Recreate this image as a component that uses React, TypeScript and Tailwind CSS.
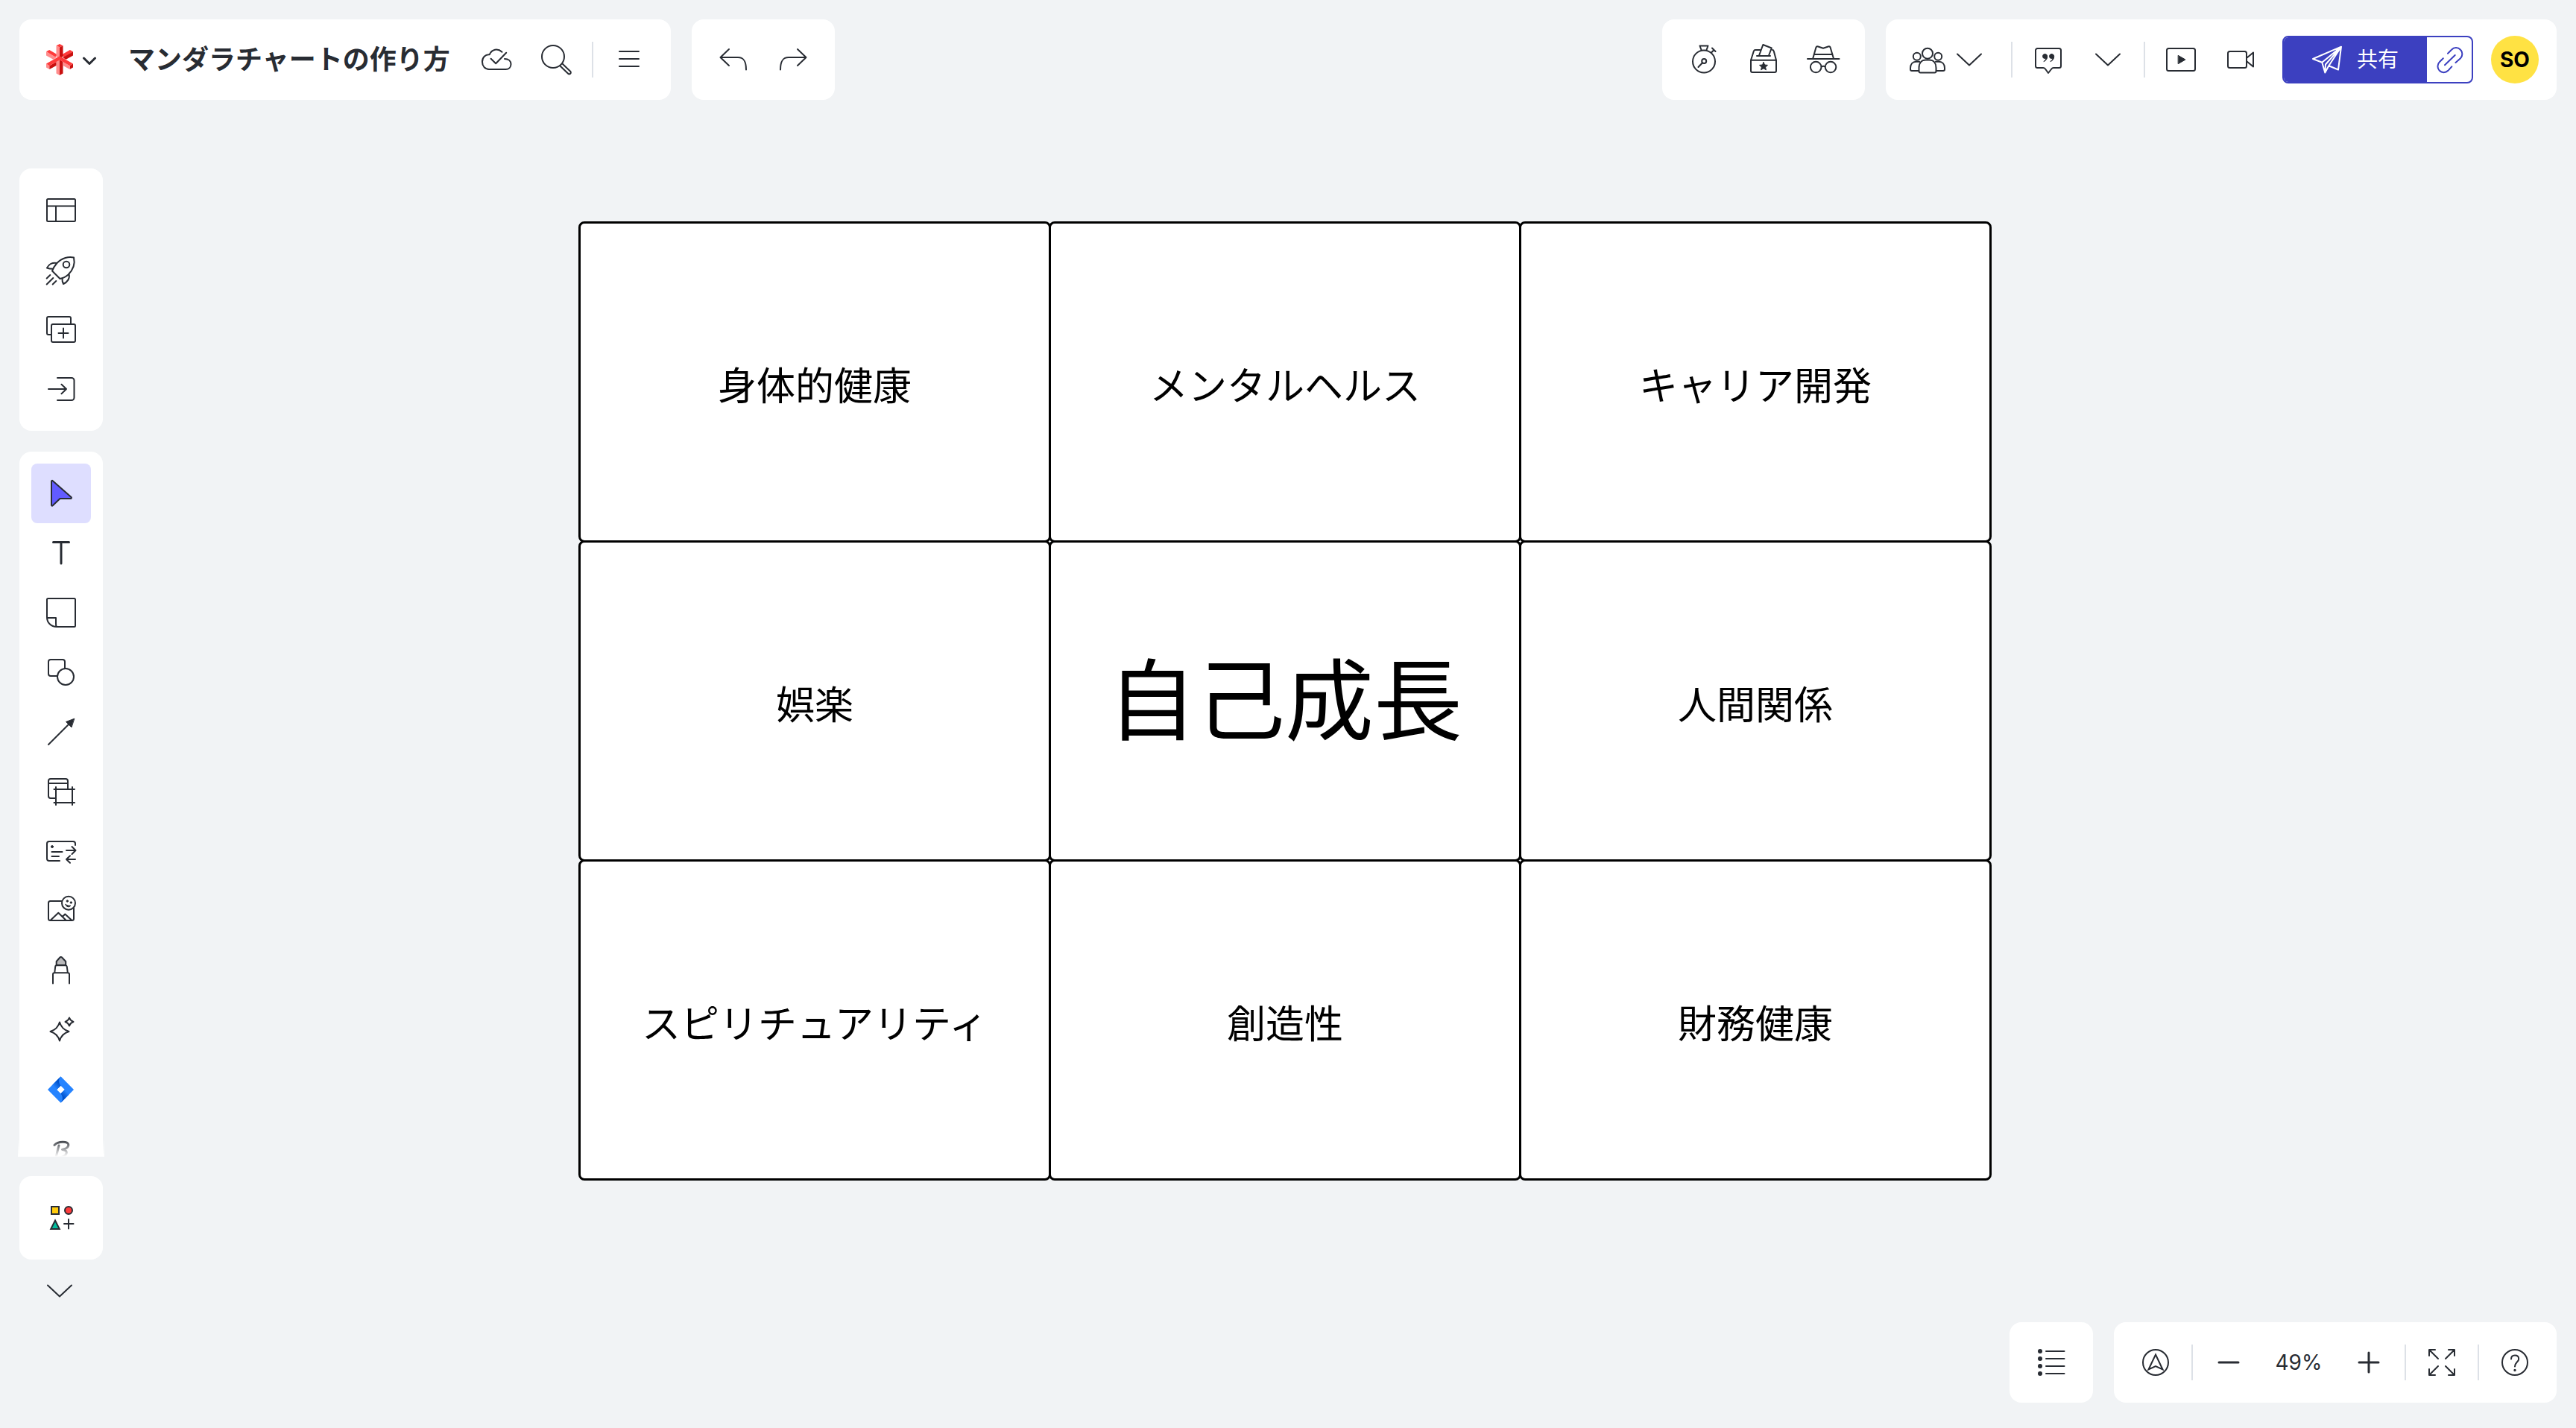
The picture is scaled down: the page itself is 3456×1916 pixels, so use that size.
import type { ReactNode } from "react";

interface IconProps {
  children: ReactNode;
  width?: number;
}

// every toolbar glyph shares the same 48px grid
function Icon({ children, width = 2 }: IconProps) {
  return (
    <svg
      viewBox="0 0 48 48"
      className="size-12 shrink-0"
      fill="none"
      stroke="currentColor"
      strokeWidth={width}
      strokeLinecap="round"
      strokeLinejoin="round"
      aria-hidden="true"
    >
      {children}
    </svg>
  );
}

function ToolButton({ label, active, children }: { label: string; active?: boolean; children: ReactNode }) {
  return (
    <button
      type="button"
      aria-label={label}
      className={`flex size-20 shrink-0 items-center justify-center rounded-lg ${active ? "bg-[#dedeff]" : ""}`}
    >
      {children}
    </button>
  );
}

function Divider() {
  return <div className="mx-2 h-12 w-[2px] shrink-0 bg-[#dde1e7]" />;
}

function Logo() {
  return (
    <svg viewBox="0 0 36 42" className="h-[42px] w-9" aria-hidden="true">
      <path fill="#ff3b3b" d="M0 10.3 4.2 8l12 7-4.4 2.6Z" />
      <path fill="#ff8c8c" d="m0 10.3 14 8L9.5 20.8 0 15.5Z" />
      <path fill="#ff3b3b" d="M36 10.3 31.8 8l-12 7 4.4 2.6Z" />
      <path fill="#c9100f" d="m36 10.3-14 8 4.5 2.5 9.5-5.3Z" />
      <path fill="#ff3b3b" d="m18 0 4.5 2.2L18 4.5l-4.5-2.3Z" />
      <path fill="#ff8c8c" d="M13.5 2.2 18 4.5V19l-4.5-2Z" />
      <path fill="#c9100f" d="M22.5 2.2 18 4.5V19l4.5-2Z" />
      <path fill="#ff8c8c" d="m13.5 24 4.5-3v21l-4.5-2.4Z" />
      <path fill="#c9100f" d="M22.5 24 18 21v21l4.5-2.4Z" />
      <path fill="#ff8c8c" d="m0 26.6 4.4 2.6V34L0 31.6Z" />
      <path fill="#c9100f" d="m4.4 29.2 9.1-5.3v5.2L4.4 34Z" />
      <path fill="#c9100f" d="m36 26.6-4.4 2.6V34l4.4-2.4Z" />
      <path fill="#ff8c8c" d="m31.6 29.2-9.1-5.3v5.2l9.1 4.9Z" />
      <path fill="#ff3b3b" d="m18 16.2 18 10.4-4.4 2.6L18 21.4 4.4 29.2 0 26.6Z" />
    </svg>
  );
}

function ChevronDown() {
  return (
    <Icon>
      <path d="m8 16.500 16 15 16-15" />
    </Icon>
  );
}

function Header() {
  return (
    <header className="flex h-[108px] shrink-0 items-stretch">
      <div className="flex items-center rounded-2xl bg-white px-4">
        <button type="button" aria-label="メインメニュー" className="ml-5 flex items-center gap-3">
          <Logo />
          <svg viewBox="0 0 20 12" className="mt-1 h-3 w-5" fill="none" stroke="#282c33" strokeWidth="3" strokeLinecap="round" strokeLinejoin="round" aria-hidden="true">
            <path d="m2.500 2 7.500 7.500L17.500 2" />
          </svg>
        </button>
        <h1 className="ml-[42px] mr-[22px] whitespace-nowrap text-[36px] leading-10 font-bold">マンダラチャートの作り方</h1>
        <ToolButton label="保存済み">
          <Icon>
            <path d="M31.500 13.800c-6-5.500-13.800-3.500-16.700 3.400C9 16.700 5 21.200 5 27c0 5.800 3.800 10 9 10h22.500c4.200 0 7-3 7-7 0-4.200-3.200-7-8.500-7" />
            <path d="m16.600 22.700 6.600 6.500 14-14.500" />
          </Icon>
        </ToolButton>
        <ToolButton label="検索">
          <Icon>
            <circle cx="20" cy="20" r="15" />
            <path d="m29.500 32.500 10.700 10.300a2.100 2.100 0 0 0 3-3L32.500 29.500" />
          </Icon>
        </ToolButton>
        <Divider />
        <ToolButton label="メニュー">
          <Icon>
            <path d="M11 13h26M11 23h26M11 33h26" />
          </Icon>
        </ToolButton>
      </div>

      <div className="ml-7 flex items-center rounded-2xl bg-white px-4">
        <ToolButton label="元に戻す">
          <Icon>
            <path d="M6.500 21H30c7.500 0 11 4.500 11 16.500M18 10 6.500 21 18 32" />
          </Icon>
        </ToolButton>
        <ToolButton label="やり直す">
          <Icon>
            <path d="M41.500 21H18C10.500 21 7 25.500 7 37.500M30 10l11.500 11L30 32" />
          </Icon>
        </ToolButton>
      </div>

      <div className="ml-auto flex items-center rounded-2xl bg-white px-4">
        <ToolButton label="タイマー">
          <Icon>
            <circle cx="24" cy="26.500" r="15" />
            <path d="M20.500 11 18.500 5.500h11l-2 5.500M34 14.500l3.500-3.500M35 8.500l4.500 4.500" />
            <circle cx="24.200" cy="26" r="3" />
            <path d="m21.800 28.500-5.300 5.500" />
          </Icon>
        </ToolButton>
        <ToolButton label="投票">
          <Icon>
            <path d="M7 24.700h34V39a2 2 0 0 1-2 2H9a2 2 0 0 1-2-2ZM7 24.700l3.800-12c.4-1.200 1.200-1.700 2.200-1.700h6M36 11c1 0 1.500.8 1.800 1.700L41 24.700M15 19h18M18 18.500 23.300 4l11.500 4.500L31 18.500" />
            <path fill="currentColor" strokeWidth="1" d="m24 27.500 1.600 3.500 3.900.4-2.900 2.600.8 3.800-3.400-2-3.400 2 .8-3.800-2.900-2.600 3.900-.4Z" />
          </Icon>
        </ToolButton>
        <ToolButton label="プライベートモード">
          <Icon>
            <path d="M3 23h42.500M10.200 22.500 14.300 8c.5-1.500 1.500-2 3-1.500l6.700 2.300 6.700-2.300c1.500-.5 2.500 0 3 1.500L38 22.500M11.800 17h24.800M21.600 33.500c1.500-1 3.500-1 5 0" />
            <circle cx="14.200" cy="34" r="7.300" />
            <circle cx="34" cy="34" r="7.300" />
          </Icon>
        </ToolButton>
      </div>

      <div className="ml-7 flex items-center rounded-2xl bg-white pl-4 pr-6">
        <ToolButton label="参加者">
          <Icon>
            <circle cx="24" cy="15.700" r="7" />
            <circle cx="9.800" cy="19.700" r="5" />
            <circle cx="38.200" cy="19.700" r="5" />
            <path d="M12.500 39.500V35c0-6.500 3.500-10.500 9-10.500h5c5.500 0 9 4 9 10.500v4.500c0 1.200-.8 2-2 2h-19c-1.200 0-2-.8-2-2ZM12 39H3c-1.200 0-2-.8-2-2v-1.500c0-5.500 3-8.800 7.500-8.800h4.500M36 39h9c1.200 0 2-.8 2-2v-1.500c0-5.500-3-8.800-7.500-8.800H35" />
          </Icon>
        </ToolButton>
        <button type="button" aria-label="参加者メニュー" className="-ml-2 mr-6 flex h-20 w-12 items-center">
          <ChevronDown />
        </button>
        <Divider />
        <ToolButton label="コメント">
          <Icon>
            <path d="M9.500 9h29A2.500 2.500 0 0 1 41 11.500v21a2.500 2.500 0 0 1-2.500 2.500h-7.500c-1.500 0-2 .5-2.700 1.500L24 42l-4-5.500c-.8-1-1.300-1.500-2.800-1.500H9.500A2.500 2.500 0 0 1 7 32.500v-21A2.500 2.500 0 0 1 9.500 9Z" />
            <path fill="currentColor" strokeWidth="1" d="M19.500 16.500a3 3 0 0 0 0 6c.6 0 1 0 1.300-.2-.2 1.800-1.300 3.200-3 4.200 3-.8 4.900-3.500 4.900-6.800 0-2-1.300-3.200-3.200-3.200ZM28.500 16.500a3 3 0 0 0 0 6c.6 0 1 0 1.300-.2-.2 1.800-1.300 3.200-3 4.200 3-.8 4.900-3.500 4.900-6.800 0-2-1.300-3.200-3.200-3.200Z" />
          </Icon>
        </ToolButton>
        <ToolButton label="コメント一覧">
          <ChevronDown />
        </ToolButton>
        <Divider />
        <ToolButton label="プレゼンテーション">
          <Icon>
            <rect x="5" y="9" width="38" height="30" rx="2.500" />
            <path fill="currentColor" strokeWidth="1" d="m20.500 18.500 9.500 5.500-9.500 5.500Z" />
          </Icon>
        </ToolButton>
        <ToolButton label="ビデオ通話">
          <Icon>
            <rect x="7" y="13" width="25" height="22" rx="2.500" />
            <path d="m32.500 21.500 8.500-7v19l-8.500-7" />
          </Icon>
        </ToolButton>

        <div className="ml-4 flex h-16 overflow-hidden rounded-lg border-2 border-[#3c40c0]">
          <button type="button" className="flex w-48 items-center justify-center gap-4 bg-[#3c40c0] pr-1 text-[28px] leading-8 text-white">
            <Icon>
              <path d="M5 23 43 6.700l-4 30.800-12.700-5.200-5 9.200-4-13.800ZM17.300 27.700 43 6.700 26.300 32.300M21.300 41.500 22 30.500 43 6.700" />
            </Icon>
            共有
          </button>
          <button type="button" aria-label="リンクをコピー" className="flex w-[60px] items-center justify-center text-[#3c40c0]">
            <Icon>
              <path d="m22 15.700 5-5a8.200 8.200 0 0 1 12 0 8.200 8.200 0 0 1 0 11.500l-6.500 5.800M15.800 22.300l-5 5a8.200 8.200 0 0 0 0 11.500 8.200 8.200 0 0 0 11.500 0l5-5.500M18 31.300 31.700 18" />
            </Icon>
          </button>
        </div>

        <button type="button" className="ml-6 size-16 rounded-full bg-[#ffe243] text-center text-[28px] leading-8 font-bold text-black">
          SO
        </button>
      </div>
    </header>
  );
}

function Sidebar() {
  return (
    <aside className="flex min-h-0 w-28 shrink-0 flex-col pt-[92px]">
      <nav aria-label="ボード" className="flex shrink-0 flex-col items-center rounded-2xl bg-white py-4">
        <ToolButton label="テンプレート">
          <Icon>
            <rect x="5" y="9" width="38" height="30" rx="1.500" />
            <path d="M5 18.500h38M17 18.500V39" />
          </Icon>
        </ToolButton>
        <ToolButton label="クイックスタート">
          <Icon>
            <path d="M41 7.500C34.500 6 25 7.500 18 15.500c-3 3.500-4.800 6.500-6 10L22.500 36c4.500-.7 8-2.800 11-5.500C41 23 42.500 14 41 7.500Z" />
            <circle cx="31" cy="17" r="4.300" />
            <path d="M18 15c-5.500-1.200-10.500 1.500-13 6.500 2.300 1 5 1.300 8 1.300M25.500 35.500c-.2 3 .3 5.500 1.500 7.500 5.500-2.500 9-7.500 7.500-13M9.300 31l-4.600 4.500M13.300 35l-8.600 8.500M17.300 39l-4.600 4.500" />
          </Icon>
        </ToolButton>
        <ToolButton label="フレームを追加">
          <Icon>
            <path d="M10.500 31H7a2 2 0 0 1-2-2V9a2 2 0 0 1 2-2h28a2 2 0 0 1 2 2v8" />
            <rect x="11" y="17" width="32" height="24" rx="2" />
            <path d="M27 22.500v13M20.500 29h13" />
          </Icon>
        </ToolButton>
        <ToolButton label="インポート">
          <Icon>
            <path d="M19 9h19a3.500 3.500 0 0 1 3.500 3.500v23A3.500 3.500 0 0 1 38 39H19M7 24h24M24.500 17.700 31 24l-6.500 6.300" />
          </Icon>
        </ToolButton>
      </nav>

      <div className="relative mt-7 min-h-0 flex-1">
        <nav aria-label="ツール" className="flex h-full flex-col items-center overflow-hidden rounded-t-2xl bg-white pt-4">
          <ToolButton label="選択" active>
            <Icon>
              <path fill="#625bff" d="M11 8c0-1 1-1.500 1.800-.8L37.500 29c.8.800.4 2-.8 2H22.500l-9.700 9.300c-.8.700-1.800.2-1.800-.8Z" />
            </Icon>
          </ToolButton>
          <ToolButton label="テキスト">
            <Icon width={3}>
              <path d="M13.500 9.500h21M24 9.500v28.500" />
            </Icon>
          </ToolButton>
          <ToolButton label="付箋">
            <Icon>
              <path d="M6.500 5h35A1.500 1.500 0 0 1 43 6.500v35a1.500 1.500 0 0 1-1.500 1.500H18C10.500 43 5 37.500 5 30V6.500A1.500 1.500 0 0 1 6.500 5ZM5 31h12v8c0 2 .3 3.200 1 4" />
            </Icon>
          </ToolButton>
          <ToolButton label="図形">
            <Icon>
              <rect x="7" y="7" width="22" height="22" rx="3" />
              <circle cx="30" cy="30" r="11" fill="#fff" />
            </Icon>
          </ToolButton>
          <ToolButton label="接続線">
            <Icon>
              <path d="m7 41 28-28" />
              <path fill="currentColor" strokeWidth="1" d="m41.500 6.300-11 4.200 7.200 7.200Z" />
            </Icon>
          </ToolButton>
          <ToolButton label="フレーム">
            <Icon>
              <path d="M17 33h-7a3 3 0 0 1-3-3V10a3 3 0 0 1 3-3h20a3 3 0 0 1 3 3v11M7 13h26" />
              <path d="M17 18v24M39 18v24M14.500 21h27.500M14.500 39h27.500" />
            </Icon>
          </ToolButton>
          <ToolButton label="カード">
            <Icon>
              <path d="M22 37H8a3 3 0 0 1-3-3V14a3 3 0 0 1 3-3h32a3 3 0 0 1 3 3v2M11.500 25h14M11.500 31h9.500M31 23h12M38.500 18l5 5-5 5M43 35H31M36 30.200 31 35l5 4.800" />
              <circle cx="12" cy="18" r="1.500" fill="currentColor" strokeWidth="1" />
            </Icon>
          </ToolButton>
          <ToolButton label="画像とスタンプ">
            <Icon>
              <path d="M25 11H9.500A2.500 2.500 0 0 0 7 13.500v21A2.500 2.500 0 0 0 9.500 37h29a2.500 2.500 0 0 0 2.500-2.500V20" />
              <path d="m10 36.500 10.300-9.800 10 9.800M25.800 32l3.500-3.500 8.700 8" />
              <circle cx="34" cy="13.700" r="9" />
              <path fill="currentColor" strokeWidth="1" d="M30 15.500c2.200 1.500 4.500 2 6.700 1.500-1 2.800-6.200 2.300-6.700-1.500Z" />
              <circle cx="32.300" cy="11" r="1.200" fill="currentColor" strokeWidth="1" />
              <circle cx="37.300" cy="13" r="1.200" fill="currentColor" strokeWidth="1" />
            </Icon>
          </ToolButton>
          <ToolButton label="ペン">
            <Icon>
              <path fill="#b9b9bb" d="M17.700 17v-5L22.500 6.500c.7-.8 1.700-.8 2.500 0l5.200 5.500v5Z" />
              <path d="m15.300 27 .9-8c.1-1.200.9-1.800 1.800-1.800h12c.9 0 1.600.6 1.800 1.800l1 8M13 41.500V29.500c0-1.500.8-2.300 2.200-2.300h17.600c1.400 0 2.200.8 2.200 2.300v12" />
            </Icon>
          </ToolButton>
          <ToolButton label="AIアシスト">
            <Icon>
              <path d="M22 13.500c2 7 5.500 10.500 12.500 12.500-7 2-10.500 5.500-12.500 12.500C20 31.500 16.500 28 9.500 26c7-2 10.500-5.500 12.500-12.500ZM35 7.500c1 3 2.500 4.500 5.500 5.500-3 1-4.500 2.500-5.500 5.500-1-3-2.500-4.500-5.500-5.500 3-1 4.500-2.500 5.500-5.500Z" />
            </Icon>
          </ToolButton>
          <ToolButton label="Jira">
            <svg viewBox="0 0 48 48" className="size-12" aria-hidden="true">
              <defs>
                <linearGradient id="jira-top" x1="20" y1="14" x2="14" y2="20" gradientUnits="userSpaceOnUse">
                  <stop offset="0" stopColor="#0052cc" />
                  <stop offset="1" stopColor="#2684ff" />
                </linearGradient>
                <linearGradient id="jira-bottom" x1="27" y1="34" x2="33" y2="28" gradientUnits="userSpaceOnUse">
                  <stop offset="0" stopColor="#0052cc" />
                  <stop offset="1" stopColor="#2684ff" />
                </linearGradient>
              </defs>
              <path fill="#2684ff" d="M23.500 6.200 41 24 23.500 41.800 6 24ZM23.500 18.700 18.200 24l5.300 5.300 5.300-5.300Z" fillRule="evenodd" />
              <path fill="url(#jira-top)" d="M23.500 18.700c-3-3.500-3.300-8.700 0-12.500L12.500 17.400l5.700 6.600Z" />
              <path fill="url(#jira-bottom)" d="M23.500 29.300c3 3.500 3.300 8.700 0 12.500l11-11.200-5.700-6.600Z" />
            </svg>
          </ToolButton>
          <ToolButton label="ブレインストーミング">
            <Icon width={3}>
              <path d="M15 18.500c3-3.500 9-4.500 14.500-4 6.500.8 6 8-4 10 9.500.5 7 10-5.500 10.500M21 19l-4 16" />
            </Icon>
          </ToolButton>
        </nav>
        {/* fades out the tools that run past the end of the bar */}
        <div className="pointer-events-none absolute -inset-x-[2px] bottom-0 h-6 bg-linear-to-t from-white to-white/0" />
      </div>

      <div className="mt-[26px] flex h-28 shrink-0 items-center justify-center rounded-2xl bg-white">
        <ToolButton label="その他のアプリ">
          <Icon>
            <rect x="11" y="9" width="10" height="10" fill="#ffcb0d" strokeLinejoin="miter" />
            <circle cx="34" cy="14" r="5" fill="#ff3b3b" />
            <path fill="#00bd9d" strokeLinejoin="miter" d="M16 27.500 10.200 39h11.600Z" />
            <path d="M34 26v12.500M28 32h12.500" />
          </Icon>
        </ToolButton>
      </div>
      <button type="button" aria-label="下へスクロール" className="flex h-[84px] w-full shrink-0 items-center justify-center pr-1">
        <ChevronDown />
      </button>
    </aside>
  );
}

const cells = [
  "身体的健康",
  "メンタルヘルス",
  "キャリア開発",
  "娯楽",
  "自己成長",
  "人間関係",
  "スピリチュアリティ",
  "創造性",
  "財務健康",
];

function MandalaChart() {
  return (
    <div className="grid w-full max-w-[1896px] grid-cols-3 pr-[3px] pb-[3px] text-black">
      {cells.map((cell) => (
        <div
          key={cell}
          className={`-mr-[3px] -mb-[3px] flex aspect-[634/431] items-center justify-center rounded-lg border-3 border-black bg-white ${
            cell === "自己成長" ? "text-[119px] leading-[120px]" : "pt-3 text-[52px] leading-[60px]"
          }`}
        >
          {cell}
        </div>
      ))}
    </div>
  );
}

function Footer() {
  return (
    <footer className="flex h-[108px] shrink-0 justify-end gap-7">
      <div className="flex items-center rounded-2xl bg-white px-4">
        <ToolButton label="フレーム一覧">
          <Icon>
            <path d="M17 9h24.500M17 19h24.500M17 29h24.500M17 39h24.500" />
            <g fill="currentColor" stroke="none">
              <circle cx="9" cy="9" r="3" />
              <circle cx="9" cy="19" r="3" />
              <circle cx="9" cy="29" r="3" />
              <circle cx="9" cy="39" r="3" />
            </g>
          </Icon>
        </ToolButton>
      </div>
      <div className="flex items-center rounded-2xl bg-white px-4">
        <ToolButton label="ナビゲーション">
          <Icon>
            <circle cx="24" cy="24" r="17" />
            <path d="m24 13.500 9.500 20L24 29l-9.500 4.500Z" strokeLinejoin="miter" />
          </Icon>
        </ToolButton>
        <Divider />
        <ToolButton label="縮小">
          <Icon width={3}>
            <path d="M11 24h26" />
          </Icon>
        </ToolButton>
        <button type="button" className="w-[108px] text-center text-[28px] leading-8">
          49%
        </button>
        <ToolButton label="拡大">
          <Icon width={3}>
            <path d="M11 24h26M24 11v26" />
          </Icon>
        </ToolButton>
        <Divider />
        <ToolButton label="画面に合わせる">
          <Icon>
            <path d="M7 15V7h8M7 7l12 12M33 7h8v8M41 7 29 19M7 33v8h8M7 41l12-12M41 33v8h-8M41 41 29 29" />
          </Icon>
        </ToolButton>
        <Divider />
        <ToolButton label="ヘルプ">
          <Icon>
            <circle cx="24" cy="24" r="17" />
            <path d="M19 19.500c0-3.200 2-5 5-5s5.200 1.800 5.200 4.700c0 4.300-5.200 4.600-5.200 10.300" />
            <circle cx="24" cy="34.500" r=".7" fill="currentColor" />
          </Icon>
        </ToolButton>
      </div>
    </footer>
  );
}

export default function App() {
  return (
    <div className="flex h-screen flex-col bg-[#f1f3f5] px-[26px] pt-[26px] pb-[34px] font-['Inter','Noto_Sans_CJK_JP',sans-serif] text-[#282c33]" lang="ja">
      <Header />
      <div className="flex min-h-0 flex-1">
        <Sidebar />
        <main className="flex min-w-0 flex-1 items-start justify-center pt-[163px] pr-[120px]">
          <MandalaChart />
        </main>
      </div>
      <Footer />
    </div>
  );
}
